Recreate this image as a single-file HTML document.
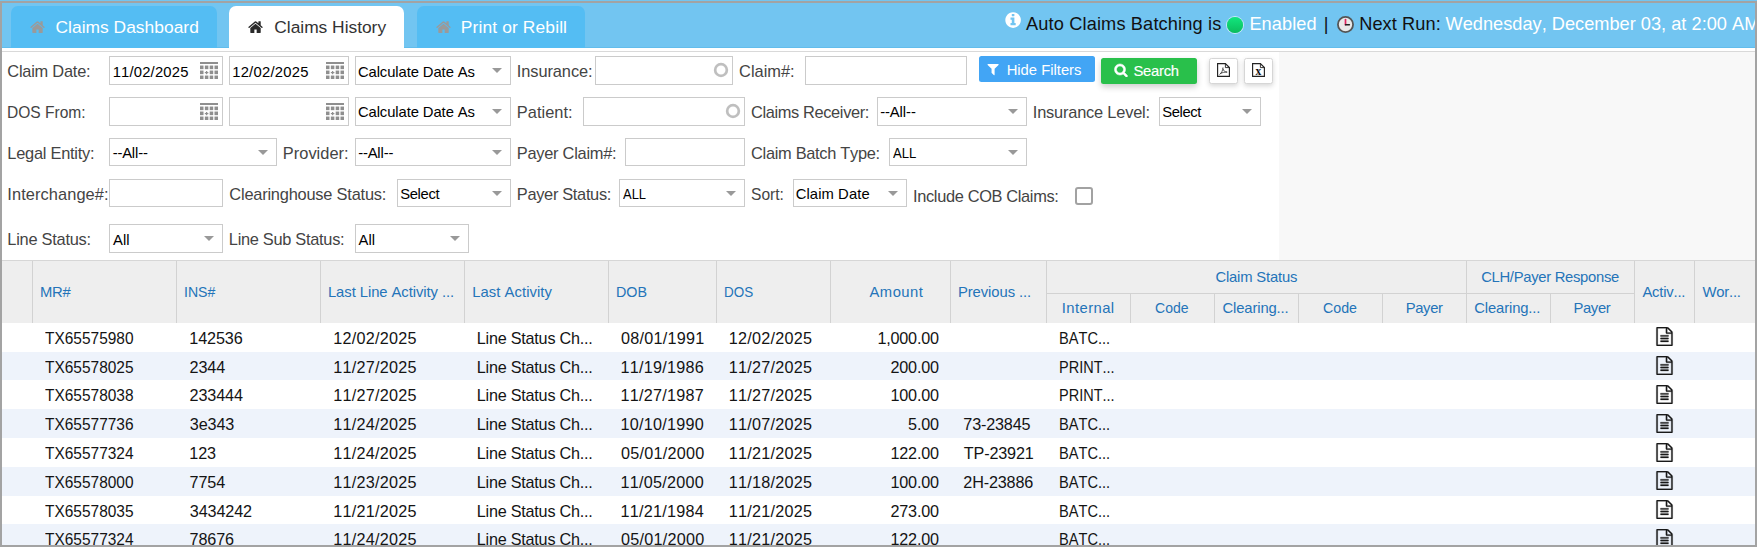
<!DOCTYPE html>
<html lang="en"><head><meta charset="utf-8"><title>Claims History</title>
<style>
html,body{margin:0;padding:0}
body{width:1757px;height:547px;overflow:hidden;position:relative;background:#fff;font-family:"Liberation Sans", sans-serif;}
.abs{position:absolute}
.t{position:absolute;white-space:pre;line-height:1;transform-origin:0 0;font-kerning:none}
#top{position:absolute;left:0;top:0;width:1757px;height:48px;background:#72c5f1}
#top:after{content:"";position:absolute;left:0;right:0;bottom:0;height:1px;background:#62bdec}
.tab{position:absolute;top:6px;height:42px;border-radius:7px 7px 0 0;background:#54bdf3}
.tab.on{background:#fff}
#line{position:absolute;left:0;top:51px;width:1757px;height:1px;background:#d9d9d9}
#side{position:absolute;left:1279px;top:52px;width:478px;height:208px;background:#f8f8f8}
.in{position:absolute;box-sizing:border-box;border:1px solid #cbcbcb;background:#fff}
.arr{position:absolute;width:0;height:0;border-left:5px solid transparent;border-right:5px solid transparent;border-top:5px solid #999}
.ring{position:absolute;box-sizing:border-box;width:14.6px;height:14.6px;border:2.3px solid #b4b4b4;border-radius:50%}
.chk{position:absolute;box-sizing:border-box;width:18px;height:17.5px;border:2px solid #a2a2a2;border-radius:3px;background:#fff}
#hide{position:absolute;left:979px;top:56px;width:116px;height:26px;background:#42a5f5;border-radius:2.5px}
#search{position:absolute;left:1101px;top:58px;width:96px;height:26px;background:#29c04b;border-radius:2.5px;box-shadow:0 3px 6px rgba(0,0,0,.2)}
.ib{position:absolute;top:57.8px;width:28.7px;height:26px;box-sizing:border-box;background:#fff;border:1px solid #d6d6d6;border-radius:2.5px;box-shadow:0 2px 5px rgba(0,0,0,.16)}
#ghead{position:absolute;left:0;top:260px;width:1757px;height:63px;background:#eee;border-top:1px solid #d6d6d6;box-sizing:border-box}
.vl{position:absolute;width:1px;background:#d2d2d2}
.hl{position:absolute;height:1px;background:#d2d2d2}
.row{position:absolute;left:0;width:1757px}
.fr{position:absolute;background:#a3a3a3}
</style></head><body>
<div id="top"></div>
<div class="tab" style="left:11px;width:205.5px"></div>
<div class="tab on" style="left:228.5px;width:175px"></div>
<div class="tab" style="left:417px;width:167.5px"></div>
<svg class="abs" style="left:30px;top:18.9px" width="16.2" height="16.2" viewBox="0 0 1792 1792" fill="#9a9a9a"><path d="M1408 992v480q0 26-19 45t-45 19h-384v-384h-256v384h-384q-26 0-45-19t-19-45v-480q0-1 .5-3t.5-3l575-474 575 474q1 2 1 6zm223-69l-62 74q-8 9-21 11h-3q-13 0-21-7l-692-577-692 577q-12 8-24 7-13-2-21-11l-62-74q-8-10-7-23.5t11-21.5l719-599q32-26 76-26t76 26l244 204v-195q0-14 9-23t23-9h192q14 0 23 9t9 23v408l219 182q10 8 11 21.5t-7 23.5z"/></svg>
<svg class="abs" style="left:248.1px;top:18.9px" width="16.2" height="16.2" viewBox="0 0 1792 1792" fill="#2a2a2a"><path d="M1408 992v480q0 26-19 45t-45 19h-384v-384h-256v384h-384q-26 0-45-19t-19-45v-480q0-1 .5-3t.5-3l575-474 575 474q1 2 1 6zm223-69l-62 74q-8 9-21 11h-3q-13 0-21-7l-692-577-692 577q-12 8-24 7-13-2-21-11l-62-74q-8-10-7-23.5t11-21.5l719-599q32-26 76-26t76 26l244 204v-195q0-14 9-23t23-9h192q14 0 23 9t9 23v408l219 182q10 8 11 21.5t-7 23.5z"/></svg>
<svg class="abs" style="left:435.6px;top:18.9px" width="16.2" height="16.2" viewBox="0 0 1792 1792" fill="#9a9a9a"><path d="M1408 992v480q0 26-19 45t-45 19h-384v-384h-256v384h-384q-26 0-45-19t-19-45v-480q0-1 .5-3t.5-3l575-474 575 474q1 2 1 6zm223-69l-62 74q-8 9-21 11h-3q-13 0-21-7l-692-577-692 577q-12 8-24 7-13-2-21-11l-62-74q-8-10-7-23.5t11-21.5l719-599q32-26 76-26t76 26l244 204v-195q0-14 9-23t23-9h192q14 0 23 9t9 23v408l219 182q10 8 11 21.5t-7 23.5z"/></svg>
<svg class="abs" style="left:1004.3px;top:10.5px" width="18.2" height="18.2" viewBox="0 0 1792 1792"><circle cx="896" cy="896" r="700" fill="#72c5f1"/><path fill="#fff" d="M1152 1376v-160q0-14-9-23t-23-9h-96v-512q0-14-9-23t-23-9h-320q-14 0-23 9t-9 23v160q0 14 9 23t23 9h96v320h-96q-14 0-23 9t-9 23v160q0 14 9 23t23 9h448q14 0 23-9t9-23zm-128-896v-160q0-14-9-23t-23-9h-192q-14 0-23 9t-9 23v160q0 14 9 23t23 9h192q14 0 23-9t9-23zm640 416q0 209-103 385.5t-279.5 279.5-385.5 103-385.5-103-279.5-279.5-103-385.5 103-385.5 279.5-279.5 385.5-103 385.5 103 279.5 279.5 103 385.5z"/></svg>
<div class="abs" style="left:1227.2px;top:16.9px;width:15.7px;height:15.7px;border-radius:50%;background:linear-gradient(#12e67e,#0bbc5c);box-shadow:0 0 0 .9px rgba(255,255,255,.6)"></div>
<svg class="abs" style="left:1336.8px;top:16.2px" width="17" height="17" viewBox="0 0 20 20"><circle cx="10" cy="10" r="8.9" fill="#e9e9e9" stroke="#555" stroke-width="2.1"/><path d="M10 10.3V4.2" stroke="#e0245e" stroke-width="2" stroke-linecap="round" fill="none"/><path d="M10 10.3h4.6" stroke="#222" stroke-width="1.7" stroke-linecap="round" fill="none"/></svg>
<div id="line"></div>
<div id="side"></div>
<div class="in" style="left:109px;top:56.3px;width:114.00px;height:28.6px"></div><svg class="abs" style="left:200.40px;top:62px" width="18" height="17" viewBox="0 0 18 17" fill="#8f8f8f"><rect x="0" y="0" width="18" height="2"/><rect x="0" y="3.55" width="3.5" height="3.6"/><rect x="4.85" y="3.55" width="3.5" height="3.6"/><rect x="9.7" y="3.55" width="3.5" height="3.6"/><rect x="14.5" y="3.55" width="3.5" height="3.6"/><rect x="0" y="8.55" width="3.5" height="3.6"/><rect x="5.949999999999999" y="9" width="1.3" height="3.2"/><rect x="4.85" y="10" width="3.5" height="1.2"/><rect x="9.7" y="8.55" width="3.5" height="3.6"/><rect x="14.5" y="8.55" width="3.5" height="3.6"/><rect x="0" y="13.55" width="3.5" height="3.6"/><rect x="4.85" y="13.55" width="3.5" height="3.6"/><rect x="9.7" y="13.55" width="3.5" height="3.6"/><rect x="14.5" y="13.55" width="3.5" height="3.6"/></svg><div class="in" style="left:229px;top:56.3px;width:120.00px;height:28.6px"></div><svg class="abs" style="left:326.40px;top:62px" width="18" height="17" viewBox="0 0 18 17" fill="#8f8f8f"><rect x="0" y="0" width="18" height="2"/><rect x="0" y="3.55" width="3.5" height="3.6"/><rect x="4.85" y="3.55" width="3.5" height="3.6"/><rect x="9.7" y="3.55" width="3.5" height="3.6"/><rect x="14.5" y="3.55" width="3.5" height="3.6"/><rect x="0" y="8.55" width="3.5" height="3.6"/><rect x="5.949999999999999" y="9" width="1.3" height="3.2"/><rect x="4.85" y="10" width="3.5" height="1.2"/><rect x="9.7" y="8.55" width="3.5" height="3.6"/><rect x="14.5" y="8.55" width="3.5" height="3.6"/><rect x="0" y="13.55" width="3.5" height="3.6"/><rect x="4.85" y="13.55" width="3.5" height="3.6"/><rect x="9.7" y="13.55" width="3.5" height="3.6"/><rect x="14.5" y="13.55" width="3.5" height="3.6"/></svg><div class="in" style="left:355px;top:56.3px;width:156.00px;height:28.6px"></div><div class="arr" style="left:492px;top:68px"></div><div class="in" style="left:595px;top:56.3px;width:138.00px;height:28.6px"></div><svg class="abs" style="left:711.70px;top:60.80px" width="18" height="18" viewBox="0 0 18 18"><circle cx="9" cy="9" r="5.85" fill="none" stroke="#bfbfbf" stroke-width="2.7"/></svg><div class="in" style="left:804.5px;top:56.3px;width:162.00px;height:28.6px"></div><div class="in" style="left:109px;top:97.05px;width:114.00px;height:28.6px"></div><svg class="abs" style="left:200.40px;top:103px" width="18" height="17" viewBox="0 0 18 17" fill="#8f8f8f"><rect x="0" y="0" width="18" height="2"/><rect x="0" y="3.55" width="3.5" height="3.6"/><rect x="4.85" y="3.55" width="3.5" height="3.6"/><rect x="9.7" y="3.55" width="3.5" height="3.6"/><rect x="14.5" y="3.55" width="3.5" height="3.6"/><rect x="0" y="8.55" width="3.5" height="3.6"/><rect x="5.949999999999999" y="9" width="1.3" height="3.2"/><rect x="4.85" y="10" width="3.5" height="1.2"/><rect x="9.7" y="8.55" width="3.5" height="3.6"/><rect x="14.5" y="8.55" width="3.5" height="3.6"/><rect x="0" y="13.55" width="3.5" height="3.6"/><rect x="4.85" y="13.55" width="3.5" height="3.6"/><rect x="9.7" y="13.55" width="3.5" height="3.6"/><rect x="14.5" y="13.55" width="3.5" height="3.6"/></svg><div class="in" style="left:229px;top:97.05px;width:120.00px;height:28.6px"></div><svg class="abs" style="left:326.40px;top:103px" width="18" height="17" viewBox="0 0 18 17" fill="#8f8f8f"><rect x="0" y="0" width="18" height="2"/><rect x="0" y="3.55" width="3.5" height="3.6"/><rect x="4.85" y="3.55" width="3.5" height="3.6"/><rect x="9.7" y="3.55" width="3.5" height="3.6"/><rect x="14.5" y="3.55" width="3.5" height="3.6"/><rect x="0" y="8.55" width="3.5" height="3.6"/><rect x="5.949999999999999" y="9" width="1.3" height="3.2"/><rect x="4.85" y="10" width="3.5" height="1.2"/><rect x="9.7" y="8.55" width="3.5" height="3.6"/><rect x="14.5" y="8.55" width="3.5" height="3.6"/><rect x="0" y="13.55" width="3.5" height="3.6"/><rect x="4.85" y="13.55" width="3.5" height="3.6"/><rect x="9.7" y="13.55" width="3.5" height="3.6"/><rect x="14.5" y="13.55" width="3.5" height="3.6"/></svg><div class="in" style="left:355px;top:97.05px;width:156.00px;height:28.6px"></div><div class="arr" style="left:492px;top:109px"></div><div class="in" style="left:583px;top:97.05px;width:162.00px;height:28.6px"></div><svg class="abs" style="left:723.70px;top:101.80px" width="18" height="18" viewBox="0 0 18 18"><circle cx="9" cy="9" r="5.85" fill="none" stroke="#bfbfbf" stroke-width="2.7"/></svg><div class="in" style="left:877px;top:97.05px;width:150.00px;height:28.6px"></div><div class="arr" style="left:1008px;top:109px"></div><div class="in" style="left:1158.5px;top:97.05px;width:102.00px;height:28.6px"></div><div class="arr" style="left:1242px;top:109px"></div><div class="in" style="left:109px;top:137.8px;width:168.00px;height:28.6px"></div><div class="arr" style="left:258px;top:150px"></div><div class="in" style="left:355px;top:137.8px;width:156.00px;height:28.6px"></div><div class="arr" style="left:492px;top:150px"></div><div class="in" style="left:624.75px;top:137.8px;width:120.25px;height:28.6px"></div><div class="in" style="left:889px;top:137.8px;width:137.50px;height:28.6px"></div><div class="arr" style="left:1008px;top:150px"></div><div class="in" style="left:109px;top:178.55px;width:114.00px;height:28.6px"></div><div class="in" style="left:396.5px;top:178.55px;width:114.50px;height:28.6px"></div><div class="arr" style="left:492px;top:191px"></div><div class="in" style="left:619px;top:178.55px;width:126.00px;height:28.6px"></div><div class="arr" style="left:726px;top:191px"></div><div class="in" style="left:792.75px;top:178.55px;width:113.75px;height:28.6px"></div><div class="arr" style="left:888px;top:191px"></div><div class="chk" style="left:1074.5px;top:187.2px"></div><div class="in" style="left:109px;top:224.3px;width:114.00px;height:28.6px"></div><div class="arr" style="left:204px;top:236px"></div><div class="in" style="left:355px;top:224.3px;width:113.50px;height:28.6px"></div><div class="arr" style="left:450px;top:236px"></div>
<div id="hide"></div><div id="search"></div>
<svg class="abs" style="left:985.9px;top:61.6px" width="14.2" height="14.2" viewBox="0 0 1792 1792" fill="#fff"><path d="M1595 295q17 41-14 70l-493 493v742q0 42-39 59-13 5-25 5-27 0-45-19l-256-256q-19-19-19-45v-486l-493-493q-31-29-14-70 17-39 59-39h1280q42 0 59 39z"/></svg>
<svg class="abs" style="left:1113.9px;top:63.2px" width="14" height="14" viewBox="0 0 1792 1792" fill="#fff" stroke="#fff" stroke-width="70"><path d="M1216 832q0-185-131.5-316.5t-316.5-131.5-316.5 131.5-131.5 316.5 131.5 316.5 316.5 131.5 316.5-131.5 131.5-316.5zm512 832q0 52-38 90t-90 38q-54 0-90-38l-343-342q-179 124-399 124-143 0-273.5-55.5t-225-150-150-225-55.5-273.5 55.5-273.5 150-225 225-150 273.5-55.5 273.5 55.5 225 150 150 225 55.5 273.5q0 220-124 399l343 343q37 37 37 90z"/></svg>
<div class="ib" style="left:1209.2px"></div><div class="ib" style="left:1244.2px"></div>
<svg class="abs" style="left:1217px;top:63px" width="13" height="14" viewBox="0 0 13 14" fill="none" stroke="#222" stroke-width="1.15"><path d="M.6 .6H8.4L12.4 4.6V13.4H.6z"/><path d="M8.4 .8V4.6H12.2" stroke-width=".9"/><path d="M2.6 11.6c1.9-1.5 3.3-4.3 3.4-7.2M5.9 5.6c.6 2.2 2.1 3.6 4.4 3.5M3.2 10.6c2.2-1.1 4.5-1.6 6.8-1.5" stroke-width=".75"/></svg>
<svg class="abs" style="left:1252px;top:63px" width="13" height="14" viewBox="0 0 13 14" fill="none" stroke="#222" stroke-width="1.15"><path d="M.6 .6H8.4L12.4 4.6V13.4H.6z"/><path d="M8.4 .8V4.6H12.2" stroke-width=".9"/><text x="6.4" y="12.2" font-family="Liberation Serif, serif" font-weight="700" font-size="11.5" text-anchor="middle" fill="#111" stroke="none">x</text></svg>
<div id="ghead"></div>
<div class="vl" style="left:32.00px;top:261px;height:62px"></div><div class="vl" style="left:176.00px;top:261px;height:62px"></div><div class="vl" style="left:320.00px;top:261px;height:62px"></div><div class="vl" style="left:464.00px;top:261px;height:62px"></div><div class="vl" style="left:608.00px;top:261px;height:62px"></div><div class="vl" style="left:716.00px;top:261px;height:62px"></div><div class="vl" style="left:830.00px;top:261px;height:62px"></div><div class="vl" style="left:950.00px;top:261px;height:62px"></div><div class="vl" style="left:1046.00px;top:261px;height:62px"></div><div class="vl" style="left:1466.00px;top:261px;height:62px"></div><div class="vl" style="left:1634.00px;top:261px;height:62px"></div><div class="vl" style="left:1694.00px;top:261px;height:62px"></div><div class="vl" style="left:1130.00px;top:293px;height:30px"></div><div class="vl" style="left:1214.00px;top:293px;height:30px"></div><div class="vl" style="left:1298.00px;top:293px;height:30px"></div><div class="vl" style="left:1382.00px;top:293px;height:30px"></div><div class="vl" style="left:1550.00px;top:293px;height:30px"></div><div class="hl" style="left:1046px;top:293px;width:588px"></div>
<div class="row" style="top:323px;height:29px;background:#fff"></div><svg class="abs" style="left:1655.2px;top:327.30px" width="19" height="19" viewBox="0 0 1792 1792"><path fill="#1a1a1a" stroke="#1a1a1a" stroke-width="25" d="M1596 380q28 28 48 76t20 88v1152q0 40-28 68t-68 28h-1344q-40 0-68-28t-28-68v-1600q0-40 28-68t68-28h896q40 0 88 20t76 48zm-444-244v376h376q-10-29-22-41l-313-313q-12-12-41-22zm384 1528v-1024h-416q-40 0-68-28t-28-68v-416h-768v1536h1280zm-1024-864q0-14 9-23t23-9h704q14 0 23 9t9 23v64q0 14-9 23t-23 9h-704q-14 0-23-9t-9-23v-64zm736 224q14 0 23 9t9 23v64q0 14-9 23t-23 9h-704q-14 0-23-9t-9-23v-64q0-14 9-23t23-9h704zm0 256q14 0 23 9t9 23v64q0 14-9 23t-23 9h-704q-14 0-23-9t-9-23v-64q0-14 9-23t23-9h704z"/></svg><div class="row" style="top:352px;height:28px;background:#eef3fb"></div><svg class="abs" style="left:1655.2px;top:356.10px" width="19" height="19" viewBox="0 0 1792 1792"><path fill="#1a1a1a" stroke="#1a1a1a" stroke-width="25" d="M1596 380q28 28 48 76t20 88v1152q0 40-28 68t-68 28h-1344q-40 0-68-28t-28-68v-1600q0-40 28-68t68-28h896q40 0 88 20t76 48zm-444-244v376h376q-10-29-22-41l-313-313q-12-12-41-22zm384 1528v-1024h-416q-40 0-68-28t-28-68v-416h-768v1536h1280zm-1024-864q0-14 9-23t23-9h704q14 0 23 9t9 23v64q0 14-9 23t-23 9h-704q-14 0-23-9t-9-23v-64zm736 224q14 0 23 9t9 23v64q0 14-9 23t-23 9h-704q-14 0-23-9t-9-23v-64q0-14 9-23t23-9h704zm0 256q14 0 23 9t9 23v64q0 14-9 23t-23 9h-704q-14 0-23-9t-9-23v-64q0-14 9-23t23-9h704z"/></svg><div class="row" style="top:380px;height:29px;background:#fff"></div><svg class="abs" style="left:1655.2px;top:384.90px" width="19" height="19" viewBox="0 0 1792 1792"><path fill="#1a1a1a" stroke="#1a1a1a" stroke-width="25" d="M1596 380q28 28 48 76t20 88v1152q0 40-28 68t-68 28h-1344q-40 0-68-28t-28-68v-1600q0-40 28-68t68-28h896q40 0 88 20t76 48zm-444-244v376h376q-10-29-22-41l-313-313q-12-12-41-22zm384 1528v-1024h-416q-40 0-68-28t-28-68v-416h-768v1536h1280zm-1024-864q0-14 9-23t23-9h704q14 0 23 9t9 23v64q0 14-9 23t-23 9h-704q-14 0-23-9t-9-23v-64zm736 224q14 0 23 9t9 23v64q0 14-9 23t-23 9h-704q-14 0-23-9t-9-23v-64q0-14 9-23t23-9h704zm0 256q14 0 23 9t9 23v64q0 14-9 23t-23 9h-704q-14 0-23-9t-9-23v-64q0-14 9-23t23-9h704z"/></svg><div class="row" style="top:409px;height:29px;background:#eef3fb"></div><svg class="abs" style="left:1655.2px;top:413.70px" width="19" height="19" viewBox="0 0 1792 1792"><path fill="#1a1a1a" stroke="#1a1a1a" stroke-width="25" d="M1596 380q28 28 48 76t20 88v1152q0 40-28 68t-68 28h-1344q-40 0-68-28t-28-68v-1600q0-40 28-68t68-28h896q40 0 88 20t76 48zm-444-244v376h376q-10-29-22-41l-313-313q-12-12-41-22zm384 1528v-1024h-416q-40 0-68-28t-28-68v-416h-768v1536h1280zm-1024-864q0-14 9-23t23-9h704q14 0 23 9t9 23v64q0 14-9 23t-23 9h-704q-14 0-23-9t-9-23v-64zm736 224q14 0 23 9t9 23v64q0 14-9 23t-23 9h-704q-14 0-23-9t-9-23v-64q0-14 9-23t23-9h704zm0 256q14 0 23 9t9 23v64q0 14-9 23t-23 9h-704q-14 0-23-9t-9-23v-64q0-14 9-23t23-9h704z"/></svg><div class="row" style="top:438px;height:29px;background:#fff"></div><svg class="abs" style="left:1655.2px;top:442.50px" width="19" height="19" viewBox="0 0 1792 1792"><path fill="#1a1a1a" stroke="#1a1a1a" stroke-width="25" d="M1596 380q28 28 48 76t20 88v1152q0 40-28 68t-68 28h-1344q-40 0-68-28t-28-68v-1600q0-40 28-68t68-28h896q40 0 88 20t76 48zm-444-244v376h376q-10-29-22-41l-313-313q-12-12-41-22zm384 1528v-1024h-416q-40 0-68-28t-28-68v-416h-768v1536h1280zm-1024-864q0-14 9-23t23-9h704q14 0 23 9t9 23v64q0 14-9 23t-23 9h-704q-14 0-23-9t-9-23v-64zm736 224q14 0 23 9t9 23v64q0 14-9 23t-23 9h-704q-14 0-23-9t-9-23v-64q0-14 9-23t23-9h704zm0 256q14 0 23 9t9 23v64q0 14-9 23t-23 9h-704q-14 0-23-9t-9-23v-64q0-14 9-23t23-9h704z"/></svg><div class="row" style="top:467px;height:29px;background:#eef3fb"></div><svg class="abs" style="left:1655.2px;top:471.30px" width="19" height="19" viewBox="0 0 1792 1792"><path fill="#1a1a1a" stroke="#1a1a1a" stroke-width="25" d="M1596 380q28 28 48 76t20 88v1152q0 40-28 68t-68 28h-1344q-40 0-68-28t-28-68v-1600q0-40 28-68t68-28h896q40 0 88 20t76 48zm-444-244v376h376q-10-29-22-41l-313-313q-12-12-41-22zm384 1528v-1024h-416q-40 0-68-28t-28-68v-416h-768v1536h1280zm-1024-864q0-14 9-23t23-9h704q14 0 23 9t9 23v64q0 14-9 23t-23 9h-704q-14 0-23-9t-9-23v-64zm736 224q14 0 23 9t9 23v64q0 14-9 23t-23 9h-704q-14 0-23-9t-9-23v-64q0-14 9-23t23-9h704zm0 256q14 0 23 9t9 23v64q0 14-9 23t-23 9h-704q-14 0-23-9t-9-23v-64q0-14 9-23t23-9h704z"/></svg><div class="row" style="top:496px;height:28px;background:#fff"></div><svg class="abs" style="left:1655.2px;top:500.10px" width="19" height="19" viewBox="0 0 1792 1792"><path fill="#1a1a1a" stroke="#1a1a1a" stroke-width="25" d="M1596 380q28 28 48 76t20 88v1152q0 40-28 68t-68 28h-1344q-40 0-68-28t-28-68v-1600q0-40 28-68t68-28h896q40 0 88 20t76 48zm-444-244v376h376q-10-29-22-41l-313-313q-12-12-41-22zm384 1528v-1024h-416q-40 0-68-28t-28-68v-416h-768v1536h1280zm-1024-864q0-14 9-23t23-9h704q14 0 23 9t9 23v64q0 14-9 23t-23 9h-704q-14 0-23-9t-9-23v-64zm736 224q14 0 23 9t9 23v64q0 14-9 23t-23 9h-704q-14 0-23-9t-9-23v-64q0-14 9-23t23-9h704zm0 256q14 0 23 9t9 23v64q0 14-9 23t-23 9h-704q-14 0-23-9t-9-23v-64q0-14 9-23t23-9h704z"/></svg><div class="row" style="top:524px;height:29px;background:#eef3fb"></div><svg class="abs" style="left:1655.2px;top:528.90px" width="19" height="19" viewBox="0 0 1792 1792"><path fill="#1a1a1a" stroke="#1a1a1a" stroke-width="25" d="M1596 380q28 28 48 76t20 88v1152q0 40-28 68t-68 28h-1344q-40 0-68-28t-28-68v-1600q0-40 28-68t68-28h896q40 0 88 20t76 48zm-444-244v376h376q-10-29-22-41l-313-313q-12-12-41-22zm384 1528v-1024h-416q-40 0-68-28t-28-68v-416h-768v1536h1280zm-1024-864q0-14 9-23t23-9h704q14 0 23 9t9 23v64q0 14-9 23t-23 9h-704q-14 0-23-9t-9-23v-64zm736 224q14 0 23 9t9 23v64q0 14-9 23t-23 9h-704q-14 0-23-9t-9-23v-64q0-14 9-23t23-9h704zm0 256q14 0 23 9t9 23v64q0 14-9 23t-23 9h-704q-14 0-23-9t-9-23v-64q0-14 9-23t23-9h704z"/></svg>
<span class="t" style="left:55.53px;top:19.00px;font-size:17.4px;letter-spacing:0.016px;color:#fff;">Claims Dashboard</span><span class="t" style="left:274.28px;top:19.00px;font-size:17.4px;letter-spacing:-0.020px;color:#333;">Claims History</span><span class="t" style="left:460.74px;top:19.00px;font-size:17.4px;letter-spacing:0.134px;color:#fff;">Print or Rebill</span><span class="t" style="left:1026.00px;top:15.00px;font-size:18.2px;letter-spacing:0.146px;color:#111;">Auto Claims Batching is</span><span class="t" style="left:1249.38px;top:15.00px;font-size:18.2px;letter-spacing:0.083px;color:#fff;">Enabled</span><span class="t" style="left:1323.78px;top:15.00px;font-size:18.2px;letter-spacing:0.000px;color:#111;">|</span><span class="t" style="left:1359.18px;top:15.00px;font-size:18.2px;letter-spacing:0.087px;color:#111;">Next Run:</span><span class="t" style="left:1445.50px;top:15.00px;font-size:18.2px;letter-spacing:0.013px;color:#fff;">Wednesday, December 03, at 2:00 AM</span><span class="t" style="left:7.33px;top:63.00px;font-size:16.4px;letter-spacing:-0.237px;color:#444;">Claim Date:</span><span class="t" style="left:516.82px;top:63.00px;font-size:16.4px;letter-spacing:-0.086px;color:#444;">Insurance:</span><span class="t" style="left:739.08px;top:63.00px;font-size:16.4px;letter-spacing:-0.010px;color:#444;">Claim#:</span><span class="t" style="left:7.38px;top:104.00px;font-size:16.4px;transform:scaleX(0.9488);color:#444;">DOS From:</span><span class="t" style="left:516.82px;top:104.00px;font-size:16.4px;letter-spacing:0.026px;color:#444;">Patient:</span><span class="t" style="left:751.08px;top:104.00px;font-size:16.4px;letter-spacing:-0.374px;color:#444;">Claims Receiver:</span><span class="t" style="left:1032.82px;top:104.00px;font-size:16.4px;letter-spacing:-0.201px;color:#444;">Insurance Level:</span><span class="t" style="left:7.32px;top:145.00px;font-size:16.4px;letter-spacing:-0.245px;color:#444;">Legal Entity:</span><span class="t" style="left:282.82px;top:145.00px;font-size:16.4px;letter-spacing:0.022px;color:#444;">Provider:</span><span class="t" style="left:516.82px;top:145.00px;font-size:16.4px;letter-spacing:-0.264px;color:#444;">Payer Claim#:</span><span class="t" style="left:751.08px;top:145.00px;font-size:16.4px;letter-spacing:-0.306px;color:#444;">Claim Batch Type:</span><span class="t" style="left:7.32px;top:186.00px;font-size:16.4px;letter-spacing:0.085px;color:#444;">Interchange#:</span><span class="t" style="left:229.33px;top:186.00px;font-size:16.4px;letter-spacing:-0.214px;color:#444;">Clearinghouse Status:</span><span class="t" style="left:516.82px;top:186.00px;font-size:16.4px;letter-spacing:-0.323px;color:#444;">Payer Status:</span><span class="t" style="left:751.36px;top:186.00px;font-size:16.4px;transform:scaleX(0.9503);color:#444;">Sort:</span><span class="t" style="left:913.07px;top:188.00px;font-size:16.4px;letter-spacing:-0.353px;color:#444;">Include COB Claims:</span><span class="t" style="left:7.32px;top:231.00px;font-size:16.4px;letter-spacing:-0.255px;color:#444;">Line Status:</span><span class="t" style="left:228.82px;top:231.00px;font-size:16.4px;letter-spacing:-0.301px;color:#444;">Line Sub Status:</span><span class="t" style="left:112.67px;top:65.00px;font-size:14.8px;letter-spacing:0.185px;color:#000;">11/02/2025</span><span class="t" style="left:232.17px;top:65.00px;font-size:14.8px;letter-spacing:0.241px;color:#000;">12/02/2025</span><span class="t" style="left:357.91px;top:65.00px;font-size:14.8px;letter-spacing:-0.083px;color:#000;">Calculate Date As</span><span class="t" style="left:357.91px;top:105.00px;font-size:14.8px;letter-spacing:-0.083px;color:#000;">Calculate Date As</span><span class="t" style="left:880.14px;top:105.00px;font-size:14.8px;letter-spacing:-0.076px;color:#000;">--All--</span><span class="t" style="left:1162.14px;top:105.00px;font-size:14.8px;letter-spacing:-0.353px;color:#000;">Select</span><span class="t" style="left:112.64px;top:146.00px;font-size:14.8px;letter-spacing:-0.159px;color:#000;">--All--</span><span class="t" style="left:358.14px;top:146.00px;font-size:14.8px;letter-spacing:-0.159px;color:#000;">--All--</span><span class="t" style="left:893.10px;top:146.00px;font-size:14.8px;transform:scaleX(0.8841);color:#000;">ALL</span><span class="t" style="left:400.14px;top:187.00px;font-size:14.8px;letter-spacing:-0.303px;color:#000;">Select</span><span class="t" style="left:623.10px;top:187.00px;font-size:14.8px;transform:scaleX(0.8744);color:#000;">ALL</span><span class="t" style="left:795.66px;top:187.00px;font-size:14.8px;letter-spacing:0.090px;color:#000;">Claim Date</span><span class="t" style="left:113.10px;top:233.00px;font-size:14.8px;letter-spacing:-0.009px;color:#000;">All</span><span class="t" style="left:358.60px;top:233.00px;font-size:14.8px;letter-spacing:-0.009px;color:#000;">All</span><span class="t" style="left:1006.64px;top:63.00px;font-size:14.8px;letter-spacing:-0.000px;color:#fff;">Hide Filters</span><span class="t" style="left:1133.44px;top:64.00px;font-size:14.8px;letter-spacing:-0.258px;color:#fff;-webkit-text-stroke:0.15px #fff;">Search</span><span class="t" style="left:39.94px;top:285.00px;font-size:14.8px;letter-spacing:-0.189px;color:#2474b9;">MR#</span><span class="t" style="left:184.00px;top:285.00px;font-size:14.8px;transform:scaleX(0.9518);color:#2474b9;">INS#</span><span class="t" style="left:327.94px;top:285.00px;font-size:14.8px;letter-spacing:-0.056px;color:#2474b9;">Last Line Activity ...</span><span class="t" style="left:472.19px;top:285.00px;font-size:14.8px;letter-spacing:0.064px;color:#2474b9;">Last Activity</span><span class="t" style="left:615.98px;top:285.00px;font-size:14.8px;transform:scaleX(0.9674);color:#2474b9;">DOB</span><span class="t" style="left:723.80px;top:285.00px;font-size:14.8px;transform:scaleX(0.9096);color:#2474b9;">DOS</span><span class="t" style="left:869.50px;top:285.00px;font-size:14.8px;letter-spacing:0.471px;color:#2474b9;">Amount</span><span class="t" style="left:957.94px;top:285.00px;font-size:14.8px;letter-spacing:-0.065px;color:#2474b9;">Previous ...</span><span class="t" style="left:1215.41px;top:270.00px;font-size:14.8px;letter-spacing:-0.174px;color:#2474b9;">Claim Status</span><span class="t" style="left:1481.16px;top:270.00px;font-size:14.8px;letter-spacing:-0.295px;color:#2474b9;">CLH/Payer Response</span><span class="t" style="left:1061.69px;top:301.00px;font-size:14.8px;letter-spacing:0.440px;color:#2474b9;">Internal</span><span class="t" style="left:1155.19px;top:301.00px;font-size:14.8px;transform:scaleX(0.9478);color:#2474b9;">Code</span><span class="t" style="left:1222.41px;top:301.00px;font-size:14.8px;letter-spacing:-0.111px;color:#2474b9;">Clearing...</span><span class="t" style="left:1323.43px;top:301.00px;font-size:14.8px;transform:scaleX(0.9624);color:#2474b9;">Code</span><span class="t" style="left:1405.69px;top:301.00px;font-size:14.8px;letter-spacing:-0.344px;color:#2474b9;">Payer</span><span class="t" style="left:1474.16px;top:301.00px;font-size:14.8px;letter-spacing:-0.111px;color:#2474b9;">Clearing...</span><span class="t" style="left:1573.44px;top:301.00px;font-size:14.8px;letter-spacing:-0.344px;color:#2474b9;">Payer</span><span class="t" style="left:1642.40px;top:285.00px;font-size:14.8px;letter-spacing:-0.194px;color:#2474b9;">Activ...</span><span class="t" style="left:1702.40px;top:285.00px;font-size:14.8px;letter-spacing:-0.184px;color:#2474b9;">Wor...</span><span class="t" style="left:44.86px;top:330.00px;font-size:16.2px;transform:scaleX(0.9549);color:#141414;">TX65575980</span><span class="t" style="left:189.34px;top:330.00px;font-size:16.2px;letter-spacing:-0.129px;color:#141414;">142536</span><span class="t" style="left:333.34px;top:330.00px;font-size:16.2px;letter-spacing:0.245px;color:#141414;">12/02/2025</span><span class="t" style="left:476.83px;top:330.00px;font-size:16.2px;letter-spacing:-0.234px;color:#141414;">Line Status Ch...</span><span class="t" style="left:621.09px;top:330.00px;font-size:16.2px;letter-spacing:0.245px;color:#141414;">08/01/1991</span><span class="t" style="left:728.84px;top:330.00px;font-size:16.2px;letter-spacing:0.245px;color:#141414;">12/02/2025</span><span class="t" style="left:877.39px;top:330.00px;font-size:16.2px;letter-spacing:-0.199px;color:#141414;">1,000.00</span><span class="t" style="left:1058.71px;top:330.00px;font-size:16.2px;transform:scaleX(0.9020);color:#141414;">BATC...</span><span class="t" style="left:44.86px;top:359.00px;font-size:16.2px;transform:scaleX(0.9548);color:#141414;">TX65578025</span><span class="t" style="left:189.59px;top:359.00px;font-size:16.2px;letter-spacing:-0.129px;color:#141414;">2344</span><span class="t" style="left:333.34px;top:359.00px;font-size:16.2px;letter-spacing:0.245px;color:#141414;">11/27/2025</span><span class="t" style="left:476.83px;top:359.00px;font-size:16.2px;letter-spacing:-0.234px;color:#141414;">Line Status Ch...</span><span class="t" style="left:620.59px;top:359.00px;font-size:16.2px;letter-spacing:0.245px;color:#141414;">11/19/1986</span><span class="t" style="left:728.84px;top:359.00px;font-size:16.2px;letter-spacing:0.245px;color:#141414;">11/27/2025</span><span class="t" style="left:890.49px;top:359.00px;font-size:16.2px;letter-spacing:-0.199px;color:#141414;">200.00</span><span class="t" style="left:1058.72px;top:359.00px;font-size:16.2px;transform:scaleX(0.8961);color:#141414;">PRINT...</span><span class="t" style="left:44.86px;top:387.00px;font-size:16.2px;transform:scaleX(0.9548);color:#141414;">TX65578038</span><span class="t" style="left:189.59px;top:387.00px;font-size:16.2px;letter-spacing:-0.129px;color:#141414;">233444</span><span class="t" style="left:333.34px;top:387.00px;font-size:16.2px;letter-spacing:0.245px;color:#141414;">11/27/2025</span><span class="t" style="left:476.83px;top:387.00px;font-size:16.2px;letter-spacing:-0.234px;color:#141414;">Line Status Ch...</span><span class="t" style="left:620.59px;top:387.00px;font-size:16.2px;letter-spacing:0.245px;color:#141414;">11/27/1987</span><span class="t" style="left:728.84px;top:387.00px;font-size:16.2px;letter-spacing:0.245px;color:#141414;">11/27/2025</span><span class="t" style="left:890.49px;top:387.00px;font-size:16.2px;letter-spacing:-0.199px;color:#141414;">100.00</span><span class="t" style="left:1058.72px;top:387.00px;font-size:16.2px;transform:scaleX(0.8961);color:#141414;">PRINT...</span><span class="t" style="left:44.86px;top:416.00px;font-size:16.2px;transform:scaleX(0.9548);color:#141414;">TX65577736</span><span class="t" style="left:189.84px;top:416.00px;font-size:16.2px;letter-spacing:-0.129px;color:#141414;">3e343</span><span class="t" style="left:333.34px;top:416.00px;font-size:16.2px;letter-spacing:0.245px;color:#141414;">11/24/2025</span><span class="t" style="left:476.83px;top:416.00px;font-size:16.2px;letter-spacing:-0.234px;color:#141414;">Line Status Ch...</span><span class="t" style="left:620.59px;top:416.00px;font-size:16.2px;letter-spacing:0.245px;color:#141414;">10/10/1990</span><span class="t" style="left:728.84px;top:416.00px;font-size:16.2px;letter-spacing:0.245px;color:#141414;">11/07/2025</span><span class="t" style="left:908.10px;top:416.00px;font-size:16.2px;letter-spacing:-0.199px;color:#141414;">5.00</span><span class="t" style="left:963.34px;top:416.00px;font-size:16.2px;letter-spacing:-0.171px;color:#141414;">73-23845</span><span class="t" style="left:1058.71px;top:416.00px;font-size:16.2px;transform:scaleX(0.9020);color:#141414;">BATC...</span><span class="t" style="left:44.86px;top:445.00px;font-size:16.2px;transform:scaleX(0.9549);color:#141414;">TX65577324</span><span class="t" style="left:189.34px;top:445.00px;font-size:16.2px;letter-spacing:-0.129px;color:#141414;">123</span><span class="t" style="left:333.34px;top:445.00px;font-size:16.2px;letter-spacing:0.245px;color:#141414;">11/24/2025</span><span class="t" style="left:476.83px;top:445.00px;font-size:16.2px;letter-spacing:-0.234px;color:#141414;">Line Status Ch...</span><span class="t" style="left:621.09px;top:445.00px;font-size:16.2px;letter-spacing:0.245px;color:#141414;">05/01/2000</span><span class="t" style="left:728.84px;top:445.00px;font-size:16.2px;letter-spacing:0.245px;color:#141414;">11/21/2025</span><span class="t" style="left:890.49px;top:445.00px;font-size:16.2px;letter-spacing:-0.199px;color:#141414;">122.00</span><span class="t" style="left:963.85px;top:445.00px;font-size:16.2px;letter-spacing:-0.171px;color:#141414;">TP-23921</span><span class="t" style="left:1058.71px;top:445.00px;font-size:16.2px;transform:scaleX(0.9020);color:#141414;">BATC...</span><span class="t" style="left:44.86px;top:474.00px;font-size:16.2px;transform:scaleX(0.9549);color:#141414;">TX65578000</span><span class="t" style="left:189.59px;top:474.00px;font-size:16.2px;letter-spacing:-0.129px;color:#141414;">7754</span><span class="t" style="left:333.34px;top:474.00px;font-size:16.2px;letter-spacing:0.245px;color:#141414;">11/23/2025</span><span class="t" style="left:476.83px;top:474.00px;font-size:16.2px;letter-spacing:-0.234px;color:#141414;">Line Status Ch...</span><span class="t" style="left:620.59px;top:474.00px;font-size:16.2px;letter-spacing:0.245px;color:#141414;">11/05/2000</span><span class="t" style="left:728.84px;top:474.00px;font-size:16.2px;letter-spacing:0.245px;color:#141414;">11/18/2025</span><span class="t" style="left:890.49px;top:474.00px;font-size:16.2px;letter-spacing:-0.199px;color:#141414;">100.00</span><span class="t" style="left:963.34px;top:474.00px;font-size:16.2px;letter-spacing:-0.171px;color:#141414;">2H-23886</span><span class="t" style="left:1058.71px;top:474.00px;font-size:16.2px;transform:scaleX(0.9020);color:#141414;">BATC...</span><span class="t" style="left:44.86px;top:503.00px;font-size:16.2px;transform:scaleX(0.9548);color:#141414;">TX65578035</span><span class="t" style="left:189.84px;top:503.00px;font-size:16.2px;letter-spacing:-0.129px;color:#141414;">3434242</span><span class="t" style="left:333.34px;top:503.00px;font-size:16.2px;letter-spacing:0.245px;color:#141414;">11/21/2025</span><span class="t" style="left:476.83px;top:503.00px;font-size:16.2px;letter-spacing:-0.234px;color:#141414;">Line Status Ch...</span><span class="t" style="left:620.59px;top:503.00px;font-size:16.2px;letter-spacing:0.245px;color:#141414;">11/21/1984</span><span class="t" style="left:728.84px;top:503.00px;font-size:16.2px;letter-spacing:0.245px;color:#141414;">11/21/2025</span><span class="t" style="left:890.49px;top:503.00px;font-size:16.2px;letter-spacing:-0.199px;color:#141414;">273.00</span><span class="t" style="left:1058.71px;top:503.00px;font-size:16.2px;transform:scaleX(0.9020);color:#141414;">BATC...</span><span class="t" style="left:44.86px;top:531.00px;font-size:16.2px;transform:scaleX(0.9549);color:#141414;">TX65577324</span><span class="t" style="left:189.59px;top:531.00px;font-size:16.2px;letter-spacing:-0.129px;color:#141414;">78676</span><span class="t" style="left:333.34px;top:531.00px;font-size:16.2px;letter-spacing:0.245px;color:#141414;">11/24/2025</span><span class="t" style="left:476.83px;top:531.00px;font-size:16.2px;letter-spacing:-0.234px;color:#141414;">Line Status Ch...</span><span class="t" style="left:621.09px;top:531.00px;font-size:16.2px;letter-spacing:0.245px;color:#141414;">05/01/2000</span><span class="t" style="left:728.84px;top:531.00px;font-size:16.2px;letter-spacing:0.245px;color:#141414;">11/21/2025</span><span class="t" style="left:890.49px;top:531.00px;font-size:16.2px;letter-spacing:-0.199px;color:#141414;">122.00</span><span class="t" style="left:1058.71px;top:531.00px;font-size:16.2px;transform:scaleX(0.9020);color:#141414;">BATC...</span>
<div class="fr" style="left:0;top:1px;width:1757px;height:2px"></div>
<div class="fr" style="left:0;top:1px;width:2px;height:546px"></div>
<div class="fr" style="left:1755px;top:1px;width:2px;height:546px"></div>
<div class="fr" style="left:0;top:545px;width:1757px;height:2px"></div>
</body></html>
